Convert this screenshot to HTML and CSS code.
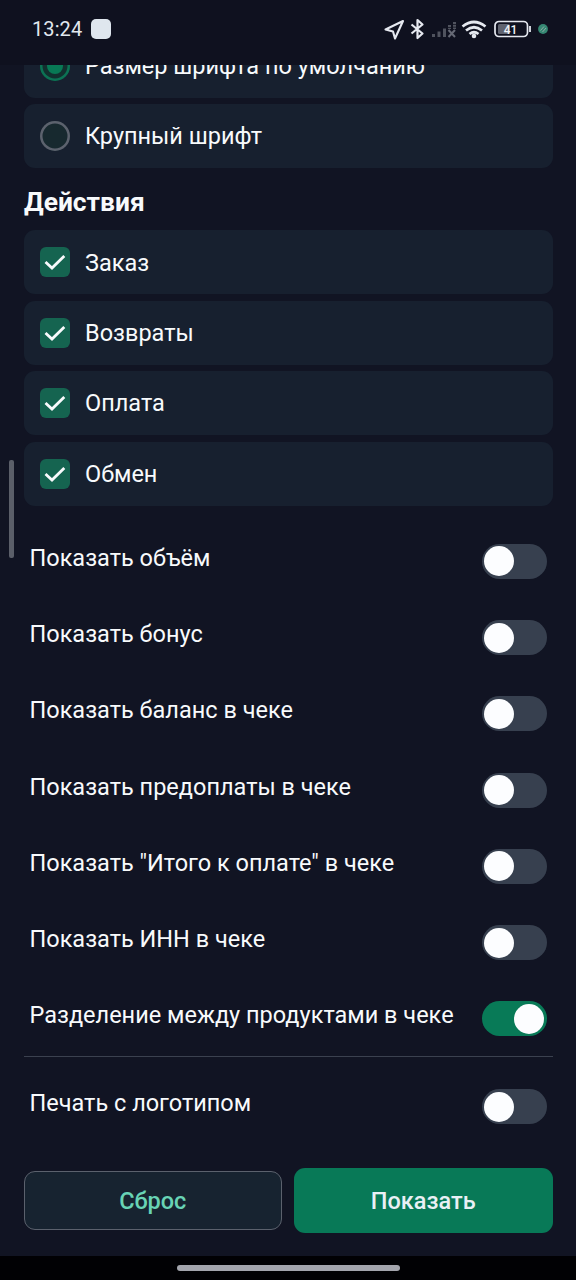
FILE: index.html
```html
<!DOCTYPE html>
<html lang="ru">
<head>
<meta charset="utf-8">
<title>Настройки чека</title>
<link rel="stylesheet" href="styles.css">
</head>
<body>
<div class="screen">
  <header class="status">
    <span class="clock">13:24</span>
    <span class="notice"></span>
    <svg class="status-icons" width="170" height="26" viewBox="0 0 170 26" fill="none">
      <path d="M5.500 13.500 23 5 15 22.500 13 15.500Z" stroke="#e6e9f0" stroke-width="2.100" stroke-linejoin="round"/>
      <path d="M31.500 8.500 42.500 17.500 37.500 22V4L42.500 8.500 31.500 17.500" stroke="#e6e9f0" stroke-width="2.200" stroke-linejoin="round"/>
      <g stroke="#50535e" stroke-width="3">
        <path d="M53.500 18V21M59 15.500V21M64.500 12.500V21"/>
        <path d="M69.500 9V13M74.500 6V13" stroke-dasharray="2 .8"/>
        <path d="M68.500 14 75 21M75 14 68.500 21" stroke="#666975" stroke-width="2"/>
      </g>
      <g stroke="#e6e9f0" stroke-width="2.700">
        <path d="M82.500 10.500Q94 1.500 105.500 10.500"/>
        <path d="M86 14.500Q94 8 102 14.500"/>
        <path d="M89.500 18Q94 14.500 98.500 18"/>
      </g>
      <circle cx="94" cy="20" r="2.300" fill="#e6e9f0"/>
      <rect x="115" y="5.500" width="32.500" height="15" rx="4" stroke="#e6e9f0" stroke-width="1.700"/>
      <rect x="118" y="8" width="12" height="10" rx="1.500" fill="#60636f"/>
      <path d="M150 10V16" stroke="#e6e9f0" stroke-width="1.800"/>
      <text class="charge" x="130.500" y="17.500" text-anchor="middle">41</text>
      <circle cx="163" cy="13" r="4.900" fill="#358873"/>
      <path d="M160.500 14.500 164 10.500M162.500 16 166 12" stroke="#92a9a5" stroke-width="1"/>
    </svg>
  </header>

  <main class="content">
    <div class="cards fonts">
      <div class="card"><span class="radio on"></span><span class="card-label">Размер шрифта по умолчанию</span></div>
      <div class="card"><span class="radio"></span><span class="card-label">Крупный шрифт</span></div>
    </div>

    <h2 class="title">Действия</h2>
    <div class="cards">
      <div class="card"><span class="check"><svg width="30" height="30" viewBox="0 0 30 30"><path d="M5.500 15 12 21 24.300 9"/></svg></span><span class="card-label">Заказ</span></div>
      <div class="card"><span class="check"><svg width="30" height="30" viewBox="0 0 30 30"><path d="M5.500 15 12 21 24.300 9"/></svg></span><span class="card-label">Возвраты</span></div>
      <div class="card"><span class="check"><svg width="30" height="30" viewBox="0 0 30 30"><path d="M5.500 15 12 21 24.300 9"/></svg></span><span class="card-label">Оплата</span></div>
      <div class="card"><span class="check"><svg width="30" height="30" viewBox="0 0 30 30"><path d="M5.500 15 12 21 24.300 9"/></svg></span><span class="card-label">Обмен</span></div>
    </div>

    <div class="rows">
      <div class="row"><span class="row-label">Показать объём</span><span class="toggle"></span></div>
      <div class="row"><span class="row-label">Показать бонус</span><span class="toggle"></span></div>
      <div class="row"><span class="row-label">Показать баланс в чеке</span><span class="toggle"></span></div>
      <div class="row"><span class="row-label">Показать предоплаты в чеке</span><span class="toggle"></span></div>
      <div class="row"><span class="row-label">Показать "Итого к оплате" в чеке</span><span class="toggle"></span></div>
      <div class="row"><span class="row-label">Показать ИНН в чеке</span><span class="toggle"></span></div>
      <div class="row"><span class="row-label">Разделение между продуктами в чеке</span><span class="toggle on"></span></div>
    </div>
    <div class="divider"></div>
    <div class="row"><span class="row-label">Печать с логотипом</span><span class="toggle"></span></div>
  </main>

  <footer class="actions">
    <button class="btn reset">Сброс</button>
    <button class="btn show">Показать</button>
  </footer>
  <div class="nav"><span class="pill"></span></div>
  <span class="scrollbar"></span>
</div>
</body>
</html>
```
FILE: styles.css
```css
* { box-sizing: border-box; }

body {
  margin: 0;
  background: #111423;
  font-family: Roboto, "Noto Sans", sans-serif;
  color: #f8fafc;
}

.screen {
  position: relative;
  display: flex;
  flex-direction: column;
  width: 576px;
  height: 1280px;
  overflow: hidden;
}

.status {
  display: flex;
  align-items: center;
  flex: none;
  height: 65px;
  padding: 0 26px 7px 32px;
  background: #0f111f;
}

.clock {
  font-size: 20px;
  letter-spacing: 0.1px;
  color: #e2e8ee;
}

.notice {
  width: 20px;
  height: 20px;
  margin-left: 9px;
  border-radius: 5px;
  background: #dfe6ee;
}

.status-icons { margin-left: auto; }

.charge {
  font-size: 12px;
  font-weight: 500;
  fill: #f0f3f8;
}

.content {
  flex: none;
  height: 1090px;
  padding: 0 23.5px 0 24px;
  overflow: hidden;
}

.cards {
  display: flex;
  flex-direction: column;
  gap: 6.4px;
}

.fonts { margin-top: -31.4px; }

.card {
  display: flex;
  align-items: center;
  height: 64px;
  padding-left: 16.4px;
  border-radius: 11px;
  background: #17202f;
}

.card-label {
  margin-left: 14.6px;
  padding-top: 0.6px;
  font-size: 23.5px;
  line-height: 30px;
}

.radio {
  display: flex;
  align-items: center;
  justify-content: center;
  width: 30px;
  height: 30px;
  border-radius: 50%;
  background: #17292f;
  box-shadow: inset 0 0 0 2.5px #5c626e;
}

.radio.on {
  background: #12302f;
  box-shadow: inset 0 0 0 2.5px #0c7254;
}

.radio.on::after {
  content: "";
  width: 16px;
  height: 16px;
  border-radius: 50%;
  background: #087955;
}

.check {
  width: 30px;
  height: 30px;
  border-radius: 6px;
  background: #156450;
}

.check svg {
  display: block;
  fill: none;
  stroke: #f8fafc;
  stroke-width: 2.8;
}

.title {
  height: 62.4px;
  margin: 0;
  padding-top: 17.6px;
  font-size: 26.4px;
  font-weight: 700;
  line-height: 32px;
}

.rows { margin-top: 17.5px; }

.row {
  display: flex;
  align-items: center;
  justify-content: space-between;
  height: 76.3px;
  padding: 0 6px 0 5.5px;
}

.row-label {
  padding-bottom: 7px;
  font-size: 23.5px;
  line-height: 30px;
  white-space: nowrap;
}

.toggle {
  display: flex;
  align-items: center;
  width: 65px;
  height: 35px;
  padding: 0 2.5px;
  border-radius: 18px;
  background: #37404f;
}

.toggle::after {
  content: "";
  width: 30px;
  height: 30px;
  border-radius: 50%;
  background: #fcfdff;
}

.toggle.on { justify-content: flex-end; background: #087a57; }

.divider {
  height: 1px;
  margin: -1.5px 0 12px;
  background: #3b414f;
}

.actions {
  display: grid;
  grid-template-columns: 1fr 1fr;
  align-items: center;
  gap: 12px;
  flex: none;
  height: 101px;
  padding: 0 23.5px 10px;
}

.btn {
  height: 58.5px;
  padding: 0;
  border: 1.5px solid #5b616d;
  border-radius: 11px;
  background: #172330;
  font: 500 23.5px Roboto, "Noto Sans", sans-serif;
  color: #68d3b5;
}

.show {
  height: 65px;
  border: 0;
  background: #087957;
  color: #e9f0f5;
}

.nav {
  display: flex;
  align-items: center;
  justify-content: center;
  flex: none;
  height: 24px;
  background: #010104;
}

.pill {
  width: 223px;
  height: 6px;
  border-radius: 3px;
  background: #a3a5ad;
}

.scrollbar {
  position: absolute;
  top: 460px;
  left: 9px;
  width: 4.5px;
  height: 98px;
  border-radius: 2px;
  background: #5b5f69;
}
```
